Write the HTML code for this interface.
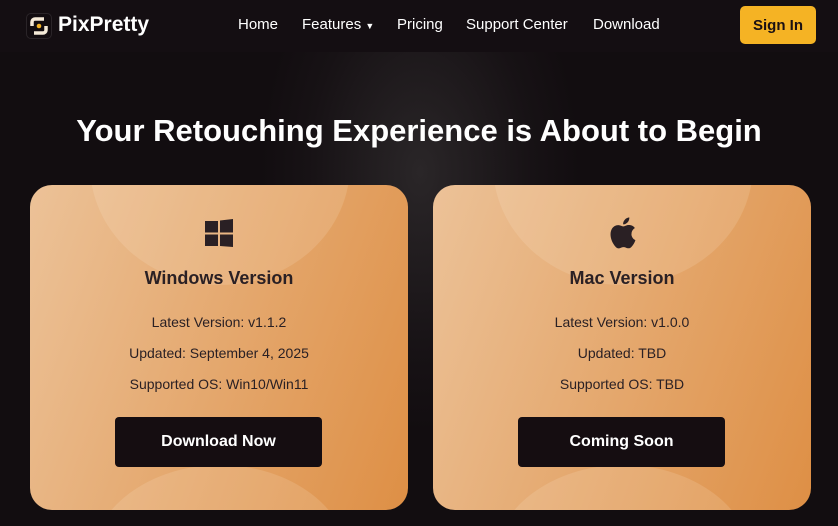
<!DOCTYPE html>
<html><head><meta charset="utf-8"><style>
*{margin:0;padding:0;box-sizing:border-box}
body{width:838px;height:526px;overflow:hidden;background:#120d10;font-family:"Liberation Sans",sans-serif;position:relative}
.hdr{position:absolute;left:0;top:0;width:838px;height:52px;background:#140e12;z-index:2}
.logo{position:absolute;left:26px;top:13px;width:26px;height:26px;border:1px solid #2a2428;border-radius:5px;background:#120c10}
.brand{position:absolute;left:58px;top:13px;color:#fff;font-weight:bold;font-size:21px}
.nav a{position:absolute;top:16px;color:#fff;font-size:15px;text-decoration:none}
.sign{position:absolute;left:740px;top:6px;width:76px;height:38px;background:#f5b324;border-radius:5px;color:#1a1013;font-size:15px;font-weight:bold;text-align:center;line-height:40px}
.hero{position:absolute;left:0;top:52px;width:838px;height:474px;background:radial-gradient(ellipse 160px 260px at 420px 120px,#2a2628,#171215 70%,#120d10)}
h1{position:absolute;top:113px;left:0;width:838px;text-align:center;color:#fff;font-size:31px;font-weight:bold;z-index:2}
.card{position:absolute;top:185px;width:378px;height:325px;border-radius:22px;background:linear-gradient(110deg,#ecc298,#e3a366 60%,#de8f45);overflow:hidden;text-align:center;color:#2a2024}
.card:before{content:"";position:absolute;left:60px;top:-140px;width:260px;height:240px;border-radius:50%;background:rgba(255,240,220,.15)}
.card:after{content:"";position:absolute;left:60px;top:280px;width:260px;height:200px;border-radius:50%;background:rgba(255,240,220,.15)}
.card .ic{position:absolute}
.card h2{position:absolute;top:83px;width:100%;font-size:18px;font-weight:bold}
.card p{position:absolute;width:100%;font-size:14px}
.btn{position:absolute;left:85px;top:232px;width:207px;height:50px;background:#150d11;border-radius:4px;color:#fff;font-size:16px;font-weight:bold;line-height:50px;z-index:2}
</style></head><body>
<div class="hdr">
<div class="logo"><svg width="24" height="24" viewBox="0 0 24 24"><path d="M5 12V8a3 3 0 0 1 3-3h9M19 12v4a3 3 0 0 1-3 3H7" stroke="#f5ead8" stroke-width="3.5" fill="none"/><circle cx="12" cy="12" r="2.3" fill="#f5b324"/></svg></div>
<div class="brand">PixPretty</div>
<div class="nav"><a style="left:238px">Home</a><a style="left:302px">Features <span style="font-size:9px">▼</span></a><a style="left:397px">Pricing</a><a style="left:466px">Support Center</a><a style="left:593px">Download</a></div>
<div class="sign">Sign In</div>
</div>
<div class="hero"></div>
<h1>Your Retouching Experience is About to Begin</h1>
<div class="card" style="left:30px">
<svg class="ic" width="28" height="28" viewBox="0 0 28 28" style="left:175px;top:34px"><path d="M0 2h13v11.5H0zM15 1.5L28 0v13.5H15zM0 15.5h13V27H0zM15 15.5h13V28l-13-1z" fill="#2a2024"/></svg>
<h2>Windows Version</h2>
<p style="top:129px">Latest Version: v1.1.2</p>
<p style="top:160px">Updated: September 4, 2025</p>
<p style="top:191px">Supported OS: Win10/Win11</p>
<div class="btn">Download Now</div>
</div>
<div class="card" style="left:433px">
<svg class="ic" width="30" height="34" viewBox="0 0 30 34" style="left:174px;top:31px"><path d="M24.5 18c0-4 3.2-5.8 3.4-6-1.9-2.7-4.7-3-5.7-3-2.4-.3-4.7 1.4-5.9 1.4-1.3 0-3.1-1.4-5.1-1.3-2.6 0-5 1.5-6.4 3.9-2.7 4.7-.7 11.7 2 15.5 1.3 1.9 2.8 4 4.8 3.9 1.9-.1 2.7-1.3 5-1.3 2.3 0 3 1.3 5 1.2 2.1 0 3.4-1.9 4.7-3.8 1.5-2.2 2.1-4.3 2.1-4.4-.1 0-4-1.6-4-6.2zM20.7 6.3c1.1-1.3 1.8-3.1 1.6-4.9-1.6.1-3.4 1-4.5 2.3-1 1.1-1.9 3-1.6 4.7 1.7.1 3.4-.9 4.5-2.1z" fill="#2a2024"/></svg>
<h2>Mac Version</h2>
<p style="top:129px">Latest Version: v1.0.0</p>
<p style="top:160px">Updated: TBD</p>
<p style="top:191px">Supported OS: TBD</p>
<div class="btn">Coming Soon</div>
</div>
</body></html>
